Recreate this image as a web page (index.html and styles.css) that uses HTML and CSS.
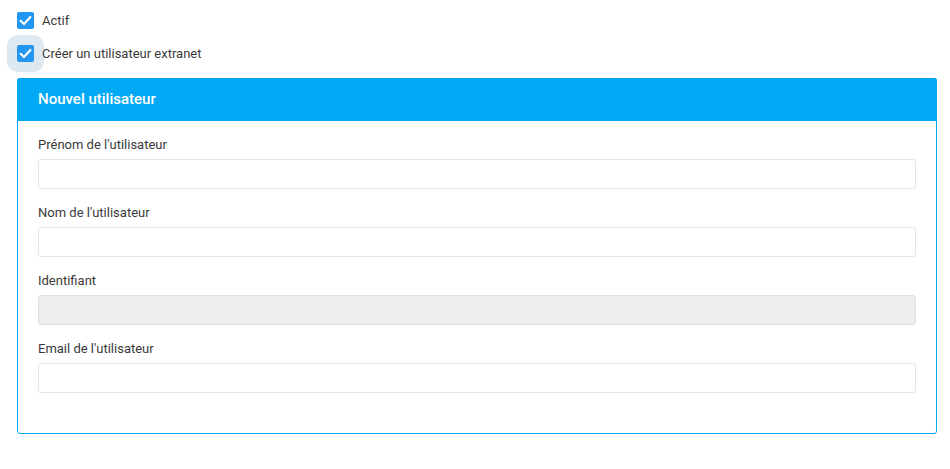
FILE: index.html
```html
<!DOCTYPE html>
<html lang="fr">
<head>
<meta charset="utf-8">
<link rel="stylesheet" href="styles.css">
</head>
<body>
<div class="page">
  <label class="check">
    <span class="box"><svg viewBox="0 0 17 17" width="17" height="17"><path d="M3.6 8.8 L7 12 L13.4 5" fill="none" stroke="#fff" stroke-width="2.2" stroke-linecap="round" stroke-linejoin="round"/></svg></span>
    <span class="check-label">Actif</span>
  </label>
  <label class="check focused">
    <span class="box"><svg viewBox="0 0 17 17" width="17" height="17"><path d="M3.6 8.8 L7 12 L13.4 5" fill="none" stroke="#fff" stroke-width="2.2" stroke-linecap="round" stroke-linejoin="round"/></svg></span>
    <span class="check-label">Créer un utilisateur extranet</span>
  </label>
  <div class="panel">
    <div class="panel-head">Nouvel utilisateur</div>
    <div class="panel-body">
      <div class="field">
        <div class="label">Prénom de l'utilisateur</div>
        <div class="input"></div>
      </div>
      <div class="field">
        <div class="label">Nom de l'utilisateur</div>
        <div class="input"></div>
      </div>
      <div class="field">
        <div class="label">Identifiant</div>
        <div class="input disabled"></div>
      </div>
      <div class="field">
        <div class="label">Email de l'utilisateur</div>
        <div class="input"></div>
      </div>
    </div>
  </div>
</div>
</body>
</html>
```
FILE: styles.css
```css
* { box-sizing: border-box; }
html, body { margin: 0; padding: 0; background: #fff; }
body { font-family: Roboto, "Noto Sans", Arial, sans-serif; color: #333; font-size: 13px; }
.page { padding: 12px 13px 0 17px; }
.check { display: flex; align-items: center; height: 17px; margin-bottom: 16px; position: relative; }
.box { width: 17px; height: 17px; background: #2196f3; border-radius: 2px; display: block; position: relative; flex: none; }
.box svg { display: block; position: relative; }
.focused .box::before { content: ""; position: absolute; left: -10px; top: -10px; width: 37px; height: 37px; border-radius: 11px; background: #dde8f1; z-index: -1; }
.focused { z-index: 0; }
.check-label { margin-left: 8px; line-height: 17px; color: #3a3a3a; }
.panel { margin-top: 0; border: 1px solid #03a9f4; border-radius: 3px; width: 920px; }
.panel-head { background: #03a9f4; color: #fff; font-weight: 500; font-size: 15px; height: 43px; line-height: 43px; margin: -1px -1px 0 -1px; border-radius: 3px 3px 0 0; padding-left: 21px; }
.panel-body { padding: 15px 20px 25px 20px; }
.field { margin-bottom: 15px; }
.label { line-height: 18px; height: 18px; margin-bottom: 5px; color: #3a3a3a; }
.input { height: 30px; border: 1px solid #e6e6e6; border-radius: 3px; background: #fff; }
.input.disabled { background: #ededed; border-color: #e0e0e0; }
```
